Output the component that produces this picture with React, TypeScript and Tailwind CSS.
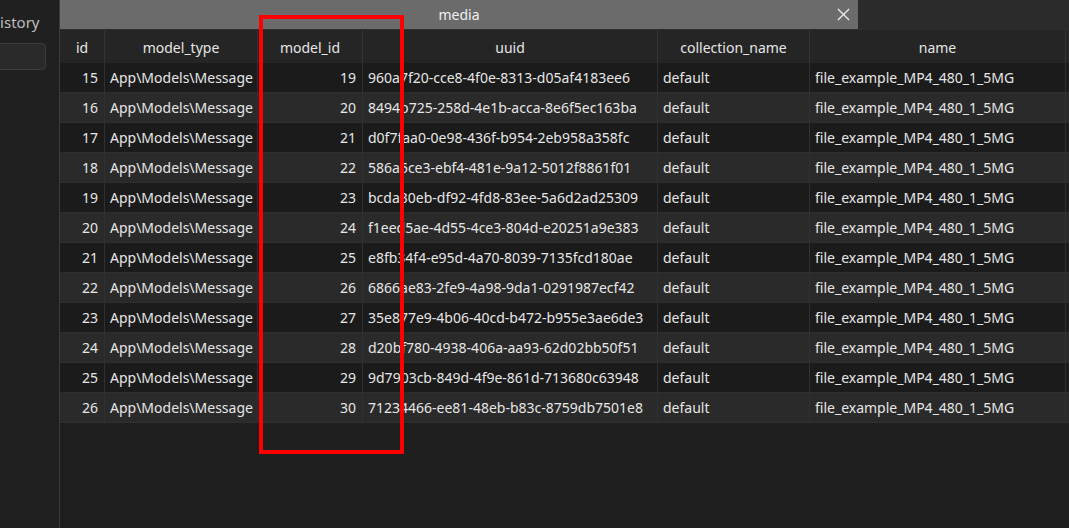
const rows = [
  [15, 19, '960a7f20-cce8-4f0e-8313-d05af4183ee6'],
  [16, 20, '8494b725-258d-4e1b-acca-8e6f5ec163ba'],
  [17, 21, 'd0f7faa0-0e98-436f-b954-2eb958a358fc'],
  [18, 22, '586a5ce3-ebf4-481e-9a12-5012f8861f01'],
  [19, 23, 'bcda30eb-df92-4fd8-83ee-5a6d2ad25309'],
  [20, 24, 'f1eed5ae-4d55-4ce3-804d-e20251a9e383'],
  [21, 25, 'e8fb34f4-e95d-4a70-8039-7135fcd180ae'],
  [22, 26, '6866ae83-2fe9-4a98-9da1-0291987ecf42'],
  [23, 27, '35e877e9-4b06-40cd-b472-b955e3ae6de3'],
  [24, 28, 'd20bf780-4938-406a-aa93-62d02bb50f51'],
  [25, 29, '9d7903cb-849d-4f9e-861d-713680c63948'],
  [26, 30, '71234466-ee81-48eb-b83c-8759db7501e8'],
] as const;

const cols = [
  { name: 'id', w: 'w-[45px]' },
  { name: 'model_type', w: 'w-[153px]' },
  { name: 'model_id', w: 'w-[105px]' },
  { name: 'uuid', w: 'w-[295px]' },
  { name: 'collection_name', w: 'w-[152px]' },
  { name: 'name', w: 'w-[256px]' },
];

export default function App() {
  return (
    <div
      className="flex h-[528px] w-[1069px] overflow-hidden bg-[#1f1f1f] text-[14px] text-[#e6e6e6]"
      style={{ fontFamily: '"Noto Sans", "Open Sans", sans-serif' }}
    >
      {/* sidebar, cut off on the left */}
      <aside className="w-[60px] shrink-0 overflow-hidden border-r border-[#3a3a3a] bg-[#202020]">
        <div className="-ml-[11px] pt-[11px] text-[15px] text-[#bdbdbd]">History</div>
        <div className="-ml-[10px] mt-[9px] h-[27px] w-[56px] rounded-[4px] border border-[#3c3c3c] bg-[#2a2a2a]" />
      </aside>

      <main className="relative flex min-w-0 flex-1 flex-col">
        {/* tabs */}
        <div className="flex h-[30px] shrink-0 border-b border-[#2e2e2e] bg-[#2b2b2b]">
          <div className="relative flex w-[798px] items-center justify-center bg-[#6b6b6b] text-[14px] text-[#f0f0f0]">
            media
            <svg
              className="absolute right-[8px] top-[8px] h-[13px] w-[13px]"
              viewBox="0 0 14 14"
              fill="none"
              stroke="#eeeeee"
              strokeWidth="1.4"
            >
              <path d="M1 1l12 12M13 1L1 13" />
            </svg>
          </div>
        </div>

        {/* header */}
        <div className="flex h-[33px] shrink-0 bg-[#252525]">
          {cols.map((c) => (
            <div
              key={c.name}
              className={`${c.w} flex shrink-0 items-center justify-center border-r border-[#333333] pt-[1px]`}
            >
              {c.name}
            </div>
          ))}
        </div>

        {/* rows */}
        {rows.map(([id, modelId, uuid], i) => (
          <div
            key={id}
            className={`flex h-[30px] shrink-0 border-b border-[#2f2f2f] ${
              i % 2 === 0 ? 'bg-[#1b1b1b]' : 'bg-[#2a2a2a]'
            }`}
          >
            <div className="flex w-[45px] shrink-0 items-center justify-end border-r border-[#303030] pr-[6px]">
              {id}
            </div>
            <div className="flex w-[153px] shrink-0 items-center border-r border-[#303030] pl-[5px] whitespace-nowrap">
              App\Models\Message
            </div>
            <div className="flex w-[105px] shrink-0 items-center justify-end border-r border-[#303030] pr-[6px]">
              {modelId}
            </div>
            <div className="flex w-[295px] shrink-0 items-center border-r border-[#303030] pl-[5px] whitespace-nowrap">
              {uuid}
            </div>
            <div className="flex w-[152px] shrink-0 items-center border-r border-[#303030] pl-[5px]">
              default
            </div>
            <div className="flex w-[256px] shrink-0 items-center border-r border-[#303030] pl-[5px] whitespace-nowrap">
              file_example_MP4_480_1_5MG
            </div>
          </div>
        ))}

        {/* annotation box */}
        <div className="pointer-events-none absolute left-[199px] top-[15px] h-[439px] w-[145px] border-4 border-[#ff0000]" />
      </main>
    </div>
  );
}
